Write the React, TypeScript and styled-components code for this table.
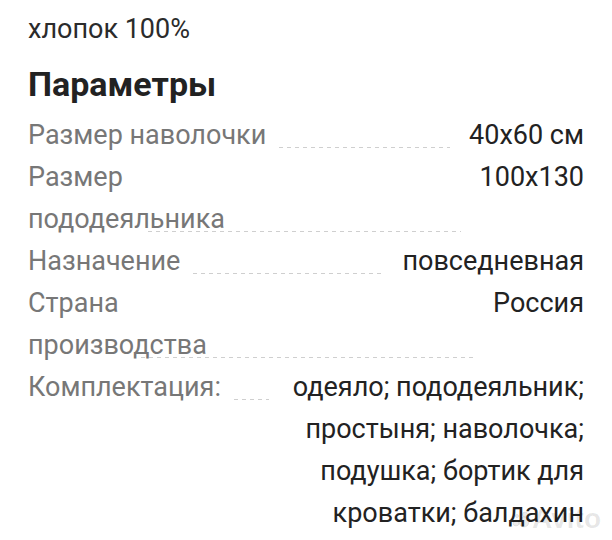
import { FC } from "react";
import styled, { createGlobalStyle } from "styled-components";

const GlobalStyle = createGlobalStyle`
  html, body {
    margin: 0;
    padding: 0;
    background: #ffffff;
  }
  body {
    font-family: Roboto, "Noto Sans", Arial, sans-serif;
    -webkit-font-smoothing: antialiased;
  }
`;

const Page = styled.div`
  position: relative;
  width: 612px;
  height: 540px;
  overflow: hidden;
  box-sizing: border-box;
  padding: 9px 28px 0 28px;
`;

const Material = styled.div`
  font-size: 27px;
  line-height: 41.6px;
  color: #2b2b2b;
`;

const Title = styled.h2`
  margin: 13px 0 10px;
  font-size: 34px;
  line-height: 40px;
  font-weight: 700;
  color: #222222;
`;

const ParamsList = styled.ul`
  list-style: none;
  margin: 0;
  padding: 0;
  font-size: 27px;
  line-height: 42px;
`;

const ParamRow = styled.li`
  display: flex;
  align-items: flex-start;
  gap: 19px;
`;

const LabelSide = styled.div`
  flex: 1 1 auto;
  min-width: 0;
  display: flex;
  align-items: flex-end;
  gap: 13px;
`;

const Label = styled.span<{ $width?: number }>`
  flex: 0 0 auto;
  min-width: 0;
  color: #777777;
  white-space: ${({ $width }) => ($width ? "normal" : "nowrap")};
  width: ${({ $width }) => ($width ? `${$width}px` : "auto")};
  max-width: ${({ $width }) => ($width ? `${$width}px` : "none")};
`;

const Dots = styled.span`
  flex: 1 1 auto;
  min-width: 16px;
  height: 1px;
  margin-bottom: 8px;
  background-image: linear-gradient(to right, #cfcfcf 50%, transparent 50%);
  background-size: 8px 1px;
  background-repeat: repeat-x;
`;

const Value = styled.span`
  flex: 0 1 auto;
  max-width: 296px;
  text-align: right;
  color: #222222;
`;

const Watermark = styled.div`
  position: absolute;
  right: 11px;
  bottom: 9px;
  display: flex;
  align-items: center;
  gap: 2px;
  color: rgba(0, 0, 0, 0.1);
  font-family: "Liberation Sans", Arial, sans-serif;
  font-weight: 700;
  font-size: 28px;
  line-height: 24px;
`;

interface IParam {
  label: string;
  value: string;
  labelWidth?: number;
}

const params: IParam[] = [
  { label: "Размер наволочки", value: "40x60 см" },
  { label: "Размер пододеяльника", value: "100x130", labelWidth: 107 },
  { label: "Назначение", value: "повседневная" },
  { label: "Страна производства", value: "Россия", labelWidth: 100 },
  {
    label: "Комплектация:",
    value: "одеяло; пододеяльник; простыня; наволочка; подушка; бортик для кроватки; балдахин",
  },
];

const AvitoMark: FC = () => (
  <Watermark>
    <svg width="18" height="17" viewBox="0 0 18 17">
      <g fill="rgba(0,0,0,0.08)" stroke="rgba(0,0,0,0.07)" strokeWidth="1">
        <circle cx="12" cy="11" r="5" />
        <circle cx="4" cy="12" r="3" />
        <circle cx="13" cy="3.5" r="2.5" />
        <circle cx="5" cy="5" r="1.6" />
      </g>
    </svg>
    Avito
  </Watermark>
);

const App: FC = () => {
  return (
    <Page>
      <GlobalStyle />
      <Material>хлопок 100%</Material>
      <Title>Параметры</Title>
      <ParamsList>
        {params.map((p) => (
          <ParamRow key={p.label}>
            <LabelSide>
              <Label $width={p.labelWidth}>{p.label}</Label>
              <Dots />
            </LabelSide>
            <Value>{p.value}</Value>
          </ParamRow>
        ))}
      </ParamsList>
      <AvitoMark />
    </Page>
  );
};

export default App;
